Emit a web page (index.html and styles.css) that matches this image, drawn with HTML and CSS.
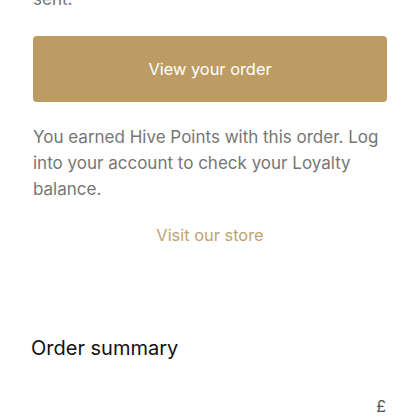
FILE: index.html
```html
<!DOCTYPE html>
<html lang="en">
<head>
<meta charset="utf-8">
<title>Order confirmation</title>
<link rel="stylesheet" href="styles.css">
</head>
<body>
<main class="page">
  <section class="confirm">
    <p class="lead"><span>Thank you for your purchase. A confirmation email has been<br>sent.</span></p>
    <a class="btn" href="#">View your order</a>
    <p class="note">You earned Hive Points with this order. Log into your account to check your Loyalty balance.</p>
    <a class="link" href="#">Visit our store</a>
  </section>
  <section class="summary">
    <h2 class="summary-title">Order summary</h2>
    <div class="summary-row"><span class="price">£</span></div>
  </section>
</main>
</body>
</html>
```
FILE: styles.css
```css
html, body {
  margin: 0;
  padding: 0;
  background: #ffffff;
}
body {
  font-family: Inter, "Noto Sans", sans-serif;
  overflow: hidden;
}
.page {
  width: 420px;
  height: 420px;
  overflow: hidden;
  display: flex;
  flex-direction: column;
}
.confirm {
  display: flex;
  flex-direction: column;
  padding: 0 33px 0 33px;
  margin-top: -31px;
}
.lead {
  margin: 0;
  font-size: 17px;
  line-height: 26px;
  color: #737373;
  height: 43px;
  overflow: hidden;
  display: flex;
  align-items: flex-end;
}
.btn {
  margin-top: 24px;
  height: 66px;
  width: 354px;
  border-radius: 4px;
  background: #bd9c64;
  color: #ffffff;
  font-size: 16.4px;
  text-decoration: none;
  display: flex;
  align-items: center;
  justify-content: center;
}
.note {
  margin: 22px 0 0 0;
  font-size: 17px;
  line-height: 26px;
  color: #767676;
}
.link {
  margin-top: 20px;
  font-size: 16.4px;
  line-height: 26px;
  color: #bea36f;
  text-decoration: none;
  text-align: center;
}
.summary {
  padding: 0 33px 0 31px;
  margin-top: 87px;
  display: flex;
  flex-direction: column;
}
.summary-title {
  margin: 0;
  font-size: 20px;
  line-height: 26px;
  font-weight: 400;
  color: #111111;
}
.summary-row {
  margin-top: 35px;
  display: flex;
  justify-content: flex-end;
  padding-right: 1px;
}
.price {
  font-size: 16px;
  color: #555555;
}
```
